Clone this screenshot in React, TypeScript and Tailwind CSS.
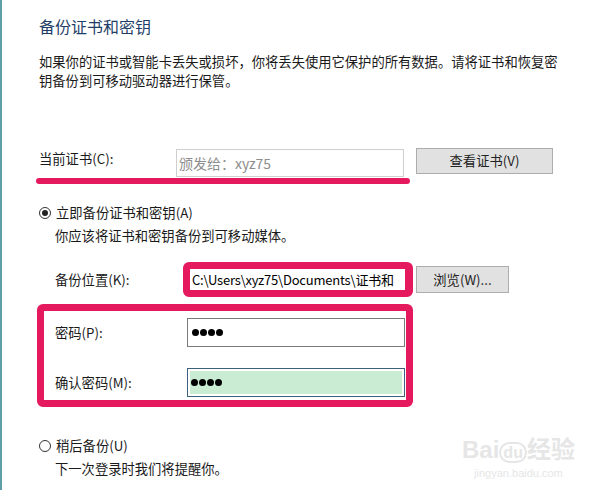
// 备份证书和密钥 — BitLocker/EFS style backup dialog page, with red highlight marks.

const FONT = { fontFamily: '"Noto Sans CJK SC", "Noto Sans", sans-serif' };

function Radio({ checked }: { checked?: boolean }) {
  return (
    <span className="flex h-[12px] w-[12px] shrink-0 items-center justify-center rounded-full border border-[#333]">
      {checked ? <span className="h-[6px] w-[6px] rounded-full bg-[#222]" /> : null}
    </span>
  );
}

function Dots() {
  return (
    <span className="flex items-center gap-[1px]">
      {[0, 1, 2, 3].map((i) => (
        <span key={i} className="h-[7px] w-[7px] rounded-full bg-black" />
      ))}
    </span>
  );
}

export default function App() {
  return (
    <div
      className="relative h-[490px] w-[599px] overflow-hidden border-l-2 border-[#5f9ea6] bg-white pl-[37px] pt-[15px] text-[13.3px] text-[#1a1a1a]"
      style={FONT}
    >
      <h1 className="text-[16px] leading-[22px] font-normal text-[#1f3f68]">备份证书和密钥</h1>

      <p className="mt-[15px] w-[522px] leading-[19px]">
        如果你的证书或智能卡丢失或损坏，你将丢失使用它保护的所有数据。请将证书和恢复密钥备份到可移动驱动器进行保管。
      </p>

      {/* current cert row */}
      <div className="mt-[58px] flex h-[29px] items-start">
        <span className="w-[137px] leading-[22px]">当前证书(C):</span>
        <div className="mt-[1px] flex h-[28px] w-[228px] items-center border border-[#cfcfcf] pl-[2px] text-[14px] text-[#8d8d8d]">
          颁发给：xyz75
        </div>
        <button className="ml-[12px] h-[26px] w-[137px] border border-[#adadad] bg-[#e1e1e1] text-[13.3px] text-[#222]">
          查看证书(V)
        </button>
      </div>
      <div className="ml-[-3px] mt-[1px] h-[6px] w-[374px] rounded-full bg-[#e5195e]" />

      <div className="mt-[19px] flex h-[20px] items-center gap-[5px]">
        <Radio checked />
        <span className="leading-[20px]">立即备份证书和密钥(A)</span>
      </div>
      <div className="ml-[16px] mt-[3px] leading-[20px]">你应该将证书和密钥备份到可移动媒体。</div>

      {/* backup location */}
      <div className="ml-[16px] mt-[16px] flex items-center">
        <span className="w-[128px] leading-[20px]">备份位置(K):</span>
        <div className="h-[35px] w-[230px] rounded-[6px] border-[7px] border-[#e5195e] bg-[#e5195e]">
          <div className="flex h-full w-[215px] items-center overflow-hidden whitespace-nowrap bg-white pl-[2px] text-[13px] tracking-[-0.2px] text-black">
            C:\Users\xyz75\Documents\证书和
          </div>
        </div>
        <button className="ml-[3px] h-[27px] w-[93px] border border-[#adadad] bg-[#e1e1e1] text-[13.3px] text-[#222]">
          浏览(W)...
        </button>
      </div>

      {/* password box */}
      <div className="ml-[-2px] mt-[7px] h-[103px] w-[376px] rounded-[6px] border-[7px] border-[#e5195e] bg-white pl-[11px] pt-[7px]">
        <div className="flex h-[29px] items-center">
          <span className="w-[132px]">密码(P):</span>
          <div className="flex h-[29px] w-[218px] items-center border border-[#7a7a7a] bg-white pl-[4px]">
            <Dots />
          </div>
        </div>
        <div className="mt-[21px] flex h-[29px] items-center">
          <span className="w-[132px]">确认密码(M):</span>
          <div className="h-[29px] w-[218px] border border-[#3f5f7f] bg-white p-[2px]">
            <div className="flex h-full items-center bg-[#c9ecd3] pl-[1px]">
              <Dots />
            </div>
          </div>
        </div>
      </div>

      <div className="mt-[29px] flex h-[20px] items-center gap-[5px]">
        <Radio />
        <span className="leading-[20px]">稍后备份(U)</span>
      </div>
      <div className="ml-[16px] mt-[3px] leading-[20px]">下一次登录时我们将提醒你。</div>

      {/* watermark */}
      <div className="absolute left-[460px] top-[436px] flex flex-col items-center text-[#e6e6e6]">
        <span className="text-[24px] font-bold leading-[28px]" style={{ fontFamily: '"Liberation Sans", "Noto Sans CJK SC", sans-serif' }}>
          Bai<span className="rounded-full border-2 border-[#e6e6e6] px-[2px] text-[16px]">du</span>经验
        </span>
        <span className="text-[11px] leading-[12px]" style={{ fontFamily: '"Liberation Sans", sans-serif' }}>
          jingyan.baidu.com
        </span>
      </div>
    </div>
  );
}
